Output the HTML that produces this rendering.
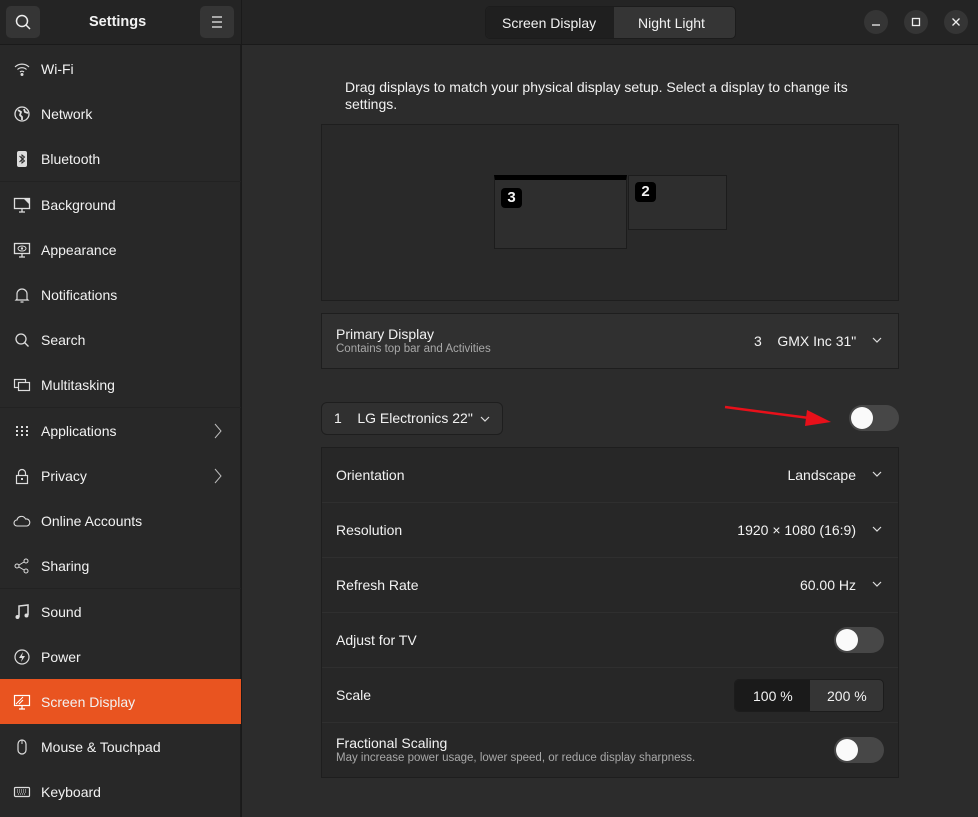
<!DOCTYPE html>
<html><head><meta charset="utf-8"><style>
*{box-sizing:border-box;margin:0;padding:0}
body{width:978px;height:817px;background:#2c2c2c;font-family:"Liberation Sans",sans-serif;color:#f2f2f2;font-size:14px;position:relative;overflow:hidden}
.a{position:absolute}
#side{left:0;top:0;width:241px;height:817px;background:#282828;border-right:1px solid #1c1c1c}
#hdr{left:0;top:0;width:978px;height:45px;background:#242424;border-bottom:1px solid #1a1a1a}
.btn{background:#353535;border-radius:5px}
.item{position:absolute;left:0;width:241px;height:45px;display:flex;align-items:center;font-size:14px}
.item svg{position:absolute;left:13px;top:50%;transform:translateY(-50%)}
.item span{position:absolute;left:41px}
.sep{position:absolute;left:0;width:241px;height:1px;background:#222}
.box{border:1px solid #1e1e1e}
.row{position:absolute;left:0;width:100%;height:55px;border-bottom:1px solid #2f2f2f;display:flex;align-items:center;padding-left:14px}
.val{position:absolute;right:42px;top:50%;transform:translateY(-50%)}
.chev{position:absolute;right:16px;top:50%;margin-top:-4px}
.tog{position:absolute;width:50px;height:26px;border-radius:13px;background:#474747}
.tog::after{content:"";position:absolute;left:2px;top:2px;width:22px;height:22px;border-radius:50%;background:#fafafa}
.wb{position:absolute;top:10px;width:24px;height:24px;border-radius:50%;background:#353535}
</style></head><body>
<div id="side" class="a"></div>
<div id="hdr" class="a"></div>
<div class="a" style="left:241px;top:0;width:1px;height:817px;background:#1a1a1a"></div>
<div class="a btn" style="left:6px;top:6px;width:34px;height:32px"><svg width="34" height="32"><circle cx="16" cy="15" r="5.5" fill="none" stroke="#eee" stroke-width="1.5"/><path d="M20 19l4 4" stroke="#eee" stroke-width="1.5"/></svg></div>
<div class="a" style="left:89px;top:14px;font-weight:bold;font-size:14.5px">Settings</div>
<div class="a btn" style="left:200px;top:6px;width:34px;height:32px"><svg width="34" height="32"><path d="M12 11h10M12 16h10M12 21h10" stroke="#eee" stroke-width="1.3"/></svg></div>

<div class="a" style="left:485px;top:6px;width:251px;height:33px;border-radius:5px;background:#353535;border:1px solid #1c1c1c;overflow:hidden">
<div class="a" style="left:0;top:0;width:128px;height:33px;background:#1f1f1f"></div>
<div class="a" style="left:16px;top:8px">Screen Display</div>
<div class="a" style="left:152px;top:8px">Night Light</div></div>
<div class="wb" style="left:864px"><svg width="24" height="24"><path d="M8 15h8" stroke="#eee" stroke-width="1.3"/></svg></div>
<div class="wb" style="left:904px"><svg width="24" height="24"><rect x="8.5" y="8.5" width="7" height="7" fill="none" stroke="#eee" stroke-width="1.3"/></svg></div>
<div class="wb" style="left:944px"><svg width="24" height="24"><path d="M8.5 8.5l7 7M15.5 8.5l-7 7" stroke="#eee" stroke-width="1.3"/></svg></div>

<!-- sidebar -->
<div class="item" style="top:46px"><svg width="18" height="18"><path d="M2 7a10 10 0 0 1 14 0M4.5 9.5a6.5 6.5 0 0 1 9 0M7 12a3 3 0 0 1 4 0" fill="none" stroke="#ddd" stroke-width="1.2"/><circle cx="9" cy="14.5" r="1.5" fill="#ddd"/></svg><span>Wi-Fi</span></div>
<div class="item" style="top:91px"><svg width="18" height="18"><circle cx="9" cy="9" r="7" fill="none" stroke="#ddd" stroke-width="1.3"/><path d="M5 5l3 2-1 3 2 2v3M11 4l1 3 3 1" fill="none" stroke="#ddd" stroke-width="1.8"/></svg><span>Network</span></div>
<div class="item" style="top:136px"><svg width="18" height="18"><rect x="4" y="1" width="10" height="16" rx="2" fill="#ddd"/><path d="M6.5 6l5 5-2.5 2V5l2.5 2-5 5" fill="none" stroke="#282828" stroke-width="1"/></svg><span>Bluetooth</span></div>
<div class="sep" style="top:181px"></div>
<div class="item" style="top:182px"><svg width="18" height="18"><rect x="1.5" y="2.5" width="15" height="10" fill="none" stroke="#ddd" stroke-width="1.3"/><path d="M11 3h5v5z" fill="#ddd"/><path d="M6 16h6M9 13v3" stroke="#ddd" stroke-width="1.3"/></svg><span>Background</span></div>
<div class="item" style="top:227px"><svg width="18" height="18"><rect x="1.5" y="2.5" width="15" height="10" fill="none" stroke="#ddd" stroke-width="1.3"/><ellipse cx="9" cy="7.5" rx="4" ry="2.5" fill="none" stroke="#ddd"/><circle cx="9" cy="7.5" r="1.2" fill="#ddd"/><path d="M6 16h6M9 13v3" stroke="#ddd" stroke-width="1.3"/></svg><span>Appearance</span></div>
<div class="item" style="top:272px"><svg width="18" height="18"><path d="M4 13V8a5 5 0 0 1 10 0v5l1 1H3z M7.5 16h3" fill="none" stroke="#ddd" stroke-width="1.2"/></svg><span>Notifications</span></div>
<div class="item" style="top:317px"><svg width="18" height="18"><circle cx="8" cy="8" r="5" fill="none" stroke="#ddd" stroke-width="1.3"/><path d="M11.5 11.5l4 4" stroke="#ddd" stroke-width="1.3"/></svg><span>Search</span></div>
<div class="item" style="top:362px"><svg width="18" height="18"><rect x="1.5" y="3.5" width="11" height="8" fill="none" stroke="#ddd" stroke-width="1.2"/><rect x="5.5" y="6.5" width="11" height="8" fill="#282828" stroke="#ddd" stroke-width="1.2"/></svg><span>Multitasking</span></div>
<div class="sep" style="top:407px"></div>
<div class="item" style="top:408px"><svg width="18" height="18"><g fill="#ddd"><rect x="3" y="4" width="2" height="2"/><rect x="8" y="4" width="2" height="2"/><rect x="13" y="4" width="2" height="2"/><rect x="3" y="8" width="2" height="2"/><rect x="8" y="8" width="2" height="2"/><rect x="13" y="8" width="2" height="2"/><rect x="3" y="12" width="2" height="2"/><rect x="8" y="12" width="2" height="2"/><rect x="13" y="12" width="2" height="2"/></g></svg><span>Applications</span><svg style="left:214px" width="8" height="16"><path d="M1 1l6 7-6 7" fill="none" stroke="#bbb"/></svg></div>
<div class="item" style="top:453px"><svg width="18" height="18"><rect x="3.5" y="8.5" width="11" height="8" fill="none" stroke="#ddd" stroke-width="1.2"/><path d="M5.5 8.5V6a3.5 3.5 0 0 1 7 0v2.5" fill="none" stroke="#ddd" stroke-width="1.2"/><rect x="8" y="11" width="2" height="2" fill="#ddd"/></svg><span>Privacy</span><svg style="left:214px" width="8" height="16"><path d="M1 1l6 7-6 7" fill="none" stroke="#bbb"/></svg></div>
<div class="item" style="top:498px"><svg width="18" height="18"><path d="M4 14a3 3 0 0 1 0-6 4.5 4.5 0 0 1 8.5-1 3.5 3.5 0 0 1 1.5 7z" fill="none" stroke="#ddd" stroke-width="1.1"/></svg><span>Online Accounts</span></div>
<div class="item" style="top:543px"><svg width="18" height="18"><circle cx="4" cy="9" r="2" fill="none" stroke="#ddd"/><circle cx="13" cy="4" r="2" fill="none" stroke="#ddd"/><circle cx="13" cy="14" r="2" fill="none" stroke="#ddd"/><path d="M6 8l5-3M6 10l5 3" stroke="#ddd"/></svg><span>Sharing</span></div>
<div class="sep" style="top:588px"></div>
<div class="item" style="top:589px"><svg width="18" height="18"><path d="M6 14V3l9-1v10" fill="none" stroke="#ddd" stroke-width="1.5"/><circle cx="4.5" cy="14" r="2" fill="#ddd"/><circle cx="13.5" cy="12.5" r="2" fill="#ddd"/></svg><span>Sound</span></div>
<div class="item" style="top:634px"><svg width="18" height="18"><circle cx="9" cy="9" r="7" fill="none" stroke="#ddd" stroke-width="1.2"/><path d="M10 4l-4 6h3l-1 4 4-6H9z" fill="#ddd"/></svg><span>Power</span></div>
<div class="item" style="top:679px;background:#e95420"><svg width="18" height="18"><rect x="1.5" y="2.5" width="15" height="10" fill="none" stroke="#fff" stroke-width="1.2"/><path d="M3 11l7-7M6 11l4-4" stroke="#fff"/><path d="M6 16h6M9 13v3" stroke="#fff" stroke-width="1.2"/></svg><span>Screen Display</span></div>
<div class="item" style="top:724px"><svg width="18" height="18"><rect x="5" y="2" width="8" height="14" rx="4" fill="none" stroke="#ddd" stroke-width="1.2"/><path d="M9 2v4" stroke="#ddd"/></svg><span>Mouse &amp; Touchpad</span></div>
<div class="item" style="top:769px"><svg width="18" height="18"><rect x="1.5" y="4.5" width="15" height="9" rx="1" fill="none" stroke="#ddd" stroke-width="1.2"/><path d="M4 7h10M4 9h10M5 11h8" stroke="#ddd" stroke-dasharray="1 1"/></svg><span>Keyboard</span></div>

<!-- main -->
<div class="a" style="left:345px;top:79px;line-height:17px;width:545px">Drag displays to match your physical display setup. Select a display to change its settings.</div>
<div class="a box" style="left:321px;top:124px;width:578px;height:177px;background:#292929"></div>
<div class="a" style="left:494px;top:175px;width:133px;height:74px;background:#2e2e2e;border:1px solid #1c1c1c;border-top:5px solid #000"></div>
<div class="a" style="left:501px;top:188px;width:21px;height:20px;background:#000;border-radius:4px;font-weight:bold;font-size:15px;text-align:center;line-height:20px">3</div>
<div class="a" style="left:628px;top:175px;width:99px;height:55px;background:#2e2e2e;border:1px solid #1c1c1c"></div>
<div class="a" style="left:635px;top:182px;width:21px;height:20px;background:#000;border-radius:4px;font-weight:bold;font-size:15px;text-align:center;line-height:20px">2</div>

<div class="a box" style="left:321px;top:313px;width:578px;height:56px;background:#303030">
<div class="a" style="left:14px;top:12px">Primary Display</div>
<div class="a" style="left:14px;top:29px;font-size:11.5px;color:#a8a8a8">Contains top bar and Activities</div>
<div class="a" style="left:432px;top:19px">3&nbsp;&nbsp;&nbsp;&nbsp;GMX Inc 31"</div>
<svg class="chev" width="10" height="7"><path d="M1 1l4 4 4-4" fill="none" stroke="#ddd" stroke-width="1.2"/></svg></div>

<div class="a" style="left:321px;top:402px;width:182px;height:33px;background:#303030;border:1px solid #1e1e1e;border-radius:6px">
<div class="a" style="left:12px;top:7px">1&nbsp;&nbsp;&nbsp;&nbsp;LG Electronics 22"</div>
<svg class="a" style="left:158px;top:13px" width="10" height="7"><path d="M1 1l4 4 4-4" fill="none" stroke="#ddd" stroke-width="1.2"/></svg></div>
<svg class="a" style="left:722px;top:402px" width="110" height="28"><path d="M3 5L95 17" stroke="#e8101a" stroke-width="2.5"/><path d="M85 8l24 12-26 4z" fill="#e8101a"/></svg>
<div class="tog" style="left:849px;top:405px"></div>

<div class="a box" style="left:321px;top:447px;width:578px;height:331px;background:#272727">
<div class="row" style="top:0">Orientation<span class="val">Landscape</span><svg class="chev" width="10" height="7"><path d="M1 1l4 4 4-4" fill="none" stroke="#ddd" stroke-width="1.2"/></svg></div>
<div class="row" style="top:55px">Resolution<span class="val">1920 × 1080 (16:9)</span><svg class="chev" width="10" height="7"><path d="M1 1l4 4 4-4" fill="none" stroke="#ddd" stroke-width="1.2"/></svg></div>
<div class="row" style="top:110px">Refresh Rate<span class="val">60.00 Hz</span><svg class="chev" width="10" height="7"><path d="M1 1l4 4 4-4" fill="none" stroke="#ddd" stroke-width="1.2"/></svg></div>
<div class="row" style="top:165px">Adjust for TV<div class="tog" style="left:512px;top:14px"></div></div>
<div class="row" style="top:220px">Scale
<div class="a" style="left:412px;top:11px;width:150px;height:33px;border-radius:5px;border:1px solid #1c1c1c;overflow:hidden;background:#353535">
<div class="a" style="left:0;top:0;width:75px;height:33px;background:#1a1a1a"></div>
<div class="a" style="left:18px;top:8px">100 %</div><div class="a" style="left:92px;top:8px">200 %</div></div></div>
<div class="row" style="top:275px;border:none">
<div class="a" style="left:14px;top:12px">Fractional Scaling</div>
<div class="a" style="left:14px;top:29px;font-size:11.5px;color:#a8a8a8">May increase power usage, lower speed, or reduce display sharpness.</div>
<div class="tog" style="left:512px;top:14px"></div></div>
</div>
</body></html>
